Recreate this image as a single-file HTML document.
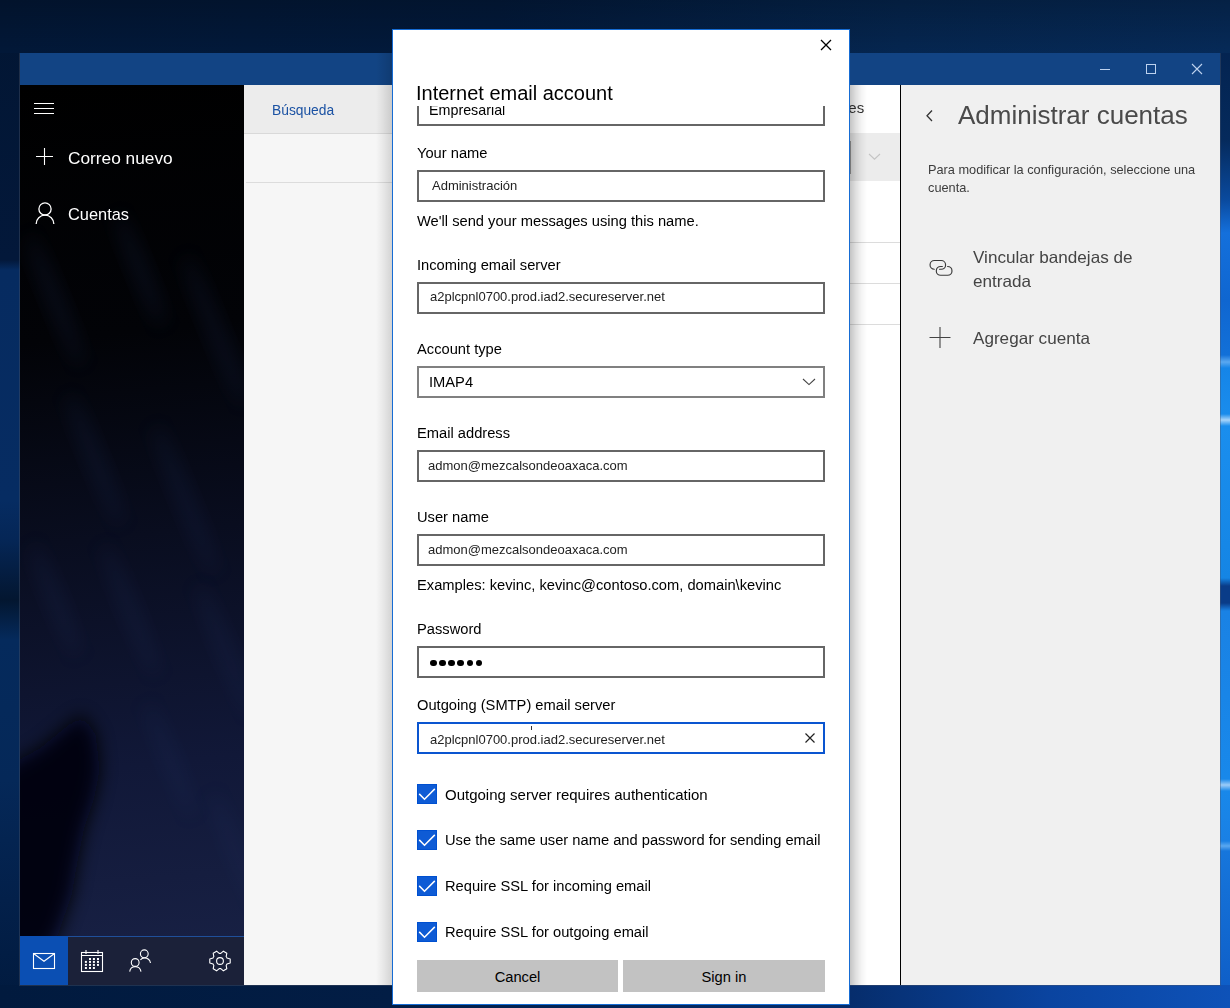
<!DOCTYPE html>
<html><head><meta charset="utf-8">
<style>
*{margin:0;padding:0;box-sizing:border-box}
html,body{width:1230px;height:1008px;overflow:hidden}
body{position:relative;font-family:"Liberation Sans",sans-serif;background:#031a3c}
.a{position:absolute}
.t{position:absolute;white-space:nowrap;line-height:1;will-change:transform}
#bg{left:0;top:0;width:1230px;height:1008px;
background:linear-gradient(180deg,#021633 0px,#03183a 260px,#062b60 270px,#062c62 500px,#052656 540px,#031630 600px,#052a5c 640px,#052858 780px,#03204a 900px,#011a3e 1008px);}
#bgr{left:1200px;top:0;width:30px;height:1008px;background:linear-gradient(180deg,#03204a 0,#052a5c 140px,#0a4a9e 200px,#1470dc 233px,#0f66d0 300px,#1270d8 355px,#5aa8f0 362px,#1585e8 368px,#1a8cec 414px,#a8d4fa 420px,#1a8eee 426px,#1585e4 578px,#0a3c88 586px,#0a3c88 603px,#1a82e4 611px,#1888ea 779px,#9cccf8 785px,#1888ea 791px,#1a80e4 841px,#5aa8f0 846px,#1676dc 851px,#0f5fc8 985px,#0c50b0 1008px)}
#bgt{left:0;top:0;width:1230px;height:53px;background:linear-gradient(180deg,rgba(0,0,0,0.22),rgba(0,0,0,0)),linear-gradient(90deg,#021838 0,#021a3c 500px,#052650 900px,#062a58 1230px)}
#bgb{left:0;top:985px;width:1230px;height:23px;background:linear-gradient(90deg,#011a3e 0,#021d45 392px,#062d6c 850px,#0a44a0 1050px,#0e52b8 1230px)}
#title{left:20px;top:53px;width:1200px;height:32px;background:#124484}
#nav{left:20px;top:85px;width:224px;height:900px;
background:linear-gradient(174deg,#000000 0%,#020307 28%,#090d1f 50%,#111838 75%,#192246 100%)}
#navbar{left:20px;top:936px;width:224px;height:49px;background:#1b2139;border-top:1px solid #1f4f9a}
#mailtile{left:20px;top:936px;width:48px;height:49px;background:#0b4fb3}
#list{left:244px;top:85px;width:656px;height:900px;background:#f6f6f6}
#srch{left:244px;top:85px;width:656px;height:49px;background:#ececec;border-bottom:1px solid #d9d9d9}
#mid{left:849px;top:85px;width:51px;height:900px;background:#fff}
#right{left:901px;top:85px;width:319px;height:900px;background:#f0f0f0}
#vline{left:900px;top:85px;width:1px;height:900px;background:#000}
#dlg{left:392px;top:29px;width:458px;height:976px;background:#fff;border:1px solid #166cd4}
.lbl{font-size:14.7px;color:#000}
.box{position:absolute;left:417px;width:408px;height:32px;border:2px solid #666;background:#fff}
.fv{font-size:13px;color:#222}
.cb{position:absolute;left:417px;width:20px;height:20px;background:#0e5bd5;border:1px solid #0050d0}
.btn{position:absolute;top:960px;height:32px;background:#c2c2c2;font-size:14.7px;color:#000;text-align:center;line-height:34px}
</style></head><body>
<div id="bg" class="a"></div>
<div id="bgr" class="a"></div>
<div id="bgt" class="a"></div>
<div id="bgb" class="a"></div>

<div class="a" style="left:19px;top:53px;width:1202px;height:933px;border:1px solid rgba(75,85,105,0.4);border-top:0"></div>
<div id="title" class="a"></div>
<div id="nav" class="a"></div>
<svg class="a" style="left:20px;top:85px" width="224" height="851" viewBox="20 85 224 851"><defs><filter id="bl" x="-50%" y="-50%" width="200%" height="200%"><feGaussianBlur stdDeviation="9"/></filter><filter id="bl2" x="-50%" y="-50%" width="200%" height="200%"><feGaussianBlur stdDeviation="25"/></filter></defs>
<ellipse cx="55" cy="300" rx="9" ry="70" fill="#22305e" opacity="0.2" filter="url(#bl)" transform="rotate(-22 55 300)"/><ellipse cx="140" cy="270" rx="9" ry="60" fill="#22305e" opacity="0.2" filter="url(#bl)" transform="rotate(-22 140 270)"/><ellipse cx="215" cy="330" rx="9" ry="80" fill="#22305e" opacity="0.2" filter="url(#bl)" transform="rotate(-22 215 330)"/><ellipse cx="95" cy="460" rx="9" ry="70" fill="#22305e" opacity="0.2" filter="url(#bl)" transform="rotate(-22 95 460)"/><ellipse cx="185" cy="500" rx="9" ry="80" fill="#22305e" opacity="0.2" filter="url(#bl)" transform="rotate(-22 185 500)"/><ellipse cx="130" cy="610" rx="9" ry="70" fill="#22305e" opacity="0.2" filter="url(#bl)" transform="rotate(-22 130 610)"/><ellipse cx="225" cy="650" rx="9" ry="70" fill="#22305e" opacity="0.2" filter="url(#bl)" transform="rotate(-22 225 650)"/><ellipse cx="55" cy="600" rx="9" ry="60" fill="#22305e" opacity="0.2" filter="url(#bl)" transform="rotate(-22 55 600)"/><ellipse cx="170" cy="760" rx="9" ry="60" fill="#22305e" opacity="0.2" filter="url(#bl)" transform="rotate(-22 170 760)"/><ellipse cx="235" cy="850" rx="9" ry="60" fill="#22305e" opacity="0.2" filter="url(#bl)" transform="rotate(-22 235 850)"/><path d="M0 770L40 748L62 730L82 714L96 735L100 770L94 800L84 830L78 860L72 895L58 935L40 960L0 960Z" fill="#040508" filter="url(#bl)" opacity="0.92"/>

</svg>
<div id="navbar" class="a"></div>
<div id="mailtile" class="a"></div>

<div id="list" class="a"></div>
<div id="srch" class="a"></div>
<div id="mid" class="a"></div>
<div id="right" class="a"></div>
<div id="vline" class="a"></div>


<!-- title bar buttons -->
<div class="a" style="left:1100px;top:69px;width:10px;height:1px;background:#bdd2ee"></div>
<div class="a" style="left:1146px;top:64px;width:10px;height:10px;border:1px solid #bdd2ee"></div>
<svg class="a" style="left:1191px;top:63px" width="12" height="12" viewBox="0 0 12 12"><path d="M1 1L11 11M11 1L1 11" stroke="#bdd2ee" stroke-width="1.1" fill="none"/></svg>
<!-- nav -->
<div class="a" style="left:34px;top:103px;width:20px;height:1px;background:#fff"></div>
<div class="a" style="left:34px;top:108px;width:20px;height:1px;background:#fff"></div>
<div class="a" style="left:34px;top:113px;width:20px;height:1px;background:#fff"></div>
<svg class="a" style="left:35px;top:147px" width="20" height="20" viewBox="0 0 20 20"><path d="M9.5 1V18M1 9.5H18" stroke="#fff" stroke-width="1.1" fill="none"/></svg>
<div class="t" style="left:68px;top:149.5px;font-size:17.3px;color:#fff">Correo nuevo</div>
<svg class="a" style="left:34px;top:201px" width="22" height="26" viewBox="0 0 22 26"><circle cx="11" cy="7.9" r="6.1" stroke="#fff" stroke-width="1.3" fill="none"/><path d="M2.15 23A8.85 8.85 0 0 1 19.85 23" stroke="#fff" stroke-width="1.3" fill="none"/></svg>
<div class="t" style="left:68px;top:205.5px;font-size:16.4px;color:#fff">Cuentas</div>
<!-- bottom nav icons -->
<svg class="a" style="left:32px;top:952px" width="24" height="18" viewBox="0 0 24 18"><rect x="1.5" y="1.5" width="21" height="15" stroke="#fff" stroke-width="1.1" fill="none"/><path d="M1.5 1.5L12 9.3L22.5 1.5" stroke="#fff" stroke-width="1.1" fill="none"/></svg>
<svg class="a" style="left:80px;top:949px" width="24" height="24" viewBox="0 0 24 24"><rect x="1.5" y="3.5" width="21" height="19" stroke="#fff" stroke-width="1.1" fill="none"/><path d="M1.5 6.5H22.5M6 1V5M18 1V5" stroke="#fff" stroke-width="1.1" fill="none"/><g fill="#fff"><rect x="9.0" y="9.0" width="2" height="2"/><rect x="12.9" y="9.0" width="2" height="2"/><rect x="17.0" y="9.0" width="2" height="2"/><rect x="4.9" y="11.9" width="2" height="2"/><rect x="9.0" y="11.9" width="2" height="2"/><rect x="12.9" y="11.9" width="2" height="2"/><rect x="17.0" y="11.9" width="2" height="2"/><rect x="4.9" y="14.9" width="2" height="2"/><rect x="9.0" y="14.9" width="2" height="2"/><rect x="12.9" y="14.9" width="2" height="2"/><rect x="17.0" y="14.9" width="2" height="2"/><rect x="4.9" y="18.0" width="2" height="2"/><rect x="9.0" y="18.0" width="2" height="2"/><rect x="12.9" y="18.0" width="2" height="2"/></g></svg>
<svg class="a" style="left:128px;top:948px" width="24" height="26" viewBox="0 0 24 26"><circle cx="16.3" cy="5.8" r="3.9" stroke="#fff" stroke-width="1.1" fill="none"/><path d="M12.4 11.8C13.4 10.6 14.8 10 16.3 10C19.5 10 22 12.2 22.5 15" stroke="#fff" stroke-width="1.1" fill="none"/><circle cx="7.2" cy="14.5" r="3.9" stroke="#fff" stroke-width="1.1" fill="none"/><path d="M1.7 23.6C2.1 20.6 4.4 18.7 7.2 18.7C10 18.7 12.5 20.6 13 23.6" stroke="#fff" stroke-width="1.1" fill="none"/></svg>
<svg class="a" style="left:208px;top:950px" width="24" height="24" viewBox="0 0 24 24"><path d="M18.94 7.91L22.21 9.02L22.21 12.98L18.94 14.09A7.6 7.6 0 0 1 18.15 15.47L18.82 18.85L15.39 20.83L12.79 18.56A7.6 7.6 0 0 1 11.21 18.56L8.61 20.83L5.18 18.85L5.85 15.47A7.6 7.6 0 0 1 5.06 14.09L1.79 12.98L1.79 9.02L5.06 7.91A7.6 7.6 0 0 1 5.85 6.53L5.18 3.15L8.61 1.17L11.21 3.44A7.6 7.6 0 0 1 12.79 3.44L15.39 1.17L18.82 3.15L18.15 6.53A7.6 7.6 0 0 1 18.94 7.91Z" stroke="#fff" stroke-width="1.1" fill="none" stroke-linejoin="round"/><circle cx="12" cy="11" r="3.4" stroke="#fff" stroke-width="1.1" fill="none"/></svg>
<!-- list pane -->
<div class="t" style="left:272px;top:103.7px;font-size:13.8px;color:#1b52a3">Búsqueda</div>
<div class="a" style="left:246px;top:182px;width:603px;height:1px;background:#dcdcdc"></div>
<div class="a" style="left:849px;top:85px;width:51px;height:48px;background:#fff"></div>
<div class="a" style="left:849px;top:133px;width:51px;height:48px;background:#ececec"></div>
<div class="t" style="left:840px;top:100px;font-size:15px;color:#333">des</div>
<div class="a" style="left:849px;top:141px;width:2px;height:33px;background:#9a9a9a"></div>
<svg class="a" style="left:867px;top:151px" width="14" height="10" viewBox="0 0 14 10"><path d="M2 3L7.5 8.2L13 3" stroke="#c4c4c4" stroke-width="1.1" fill="none"/></svg>
<div class="a" style="left:849px;top:242px;width:51px;height:1px;background:#dcdcdc"></div>
<div class="a" style="left:849px;top:283px;width:51px;height:1px;background:#dcdcdc"></div>
<div class="a" style="left:849px;top:324px;width:51px;height:1px;background:#dcdcdc"></div>
<!-- shadows -->
<div class="a" style="left:376px;top:53px;width:16px;height:932px;background:linear-gradient(90deg,rgba(0,0,0,0),rgba(0,0,0,0.05) 40%,rgba(0,0,0,0.14))"></div>
<div class="a" style="left:850px;top:85px;width:17px;height:900px;background:linear-gradient(90deg,rgba(0,0,0,0.23),rgba(0,0,0,0.12) 35%,rgba(0,0,0,0.04) 70%,rgba(0,0,0,0))"></div>
<!-- right pane -->
<svg class="a" style="left:924px;top:109px" width="12" height="14" viewBox="0 0 12 14"><path d="M8 1.5L3 6.8L8 12" stroke="#333" stroke-width="1.3" fill="none"/></svg>
<div class="t" style="left:958px;top:102.3px;font-size:26px;color:#4a4a4a">Administrar cuentas</div>
<div class="t" style="left:928px;top:160.7px;font-size:12.75px;color:#3c3c3c;line-height:17.5px">Para modificar la configuración, seleccione una<br>cuenta.</div>
<svg class="a" style="left:924px;top:254px" width="34" height="28" viewBox="0 0 1224 1008"><path d="M370 550A157 157 0 0 1 380 235H620A157 157 0 0 1 620 550H560M660 450H600A157 157 0 0 0 600 765H850A157 157 0 0 0 850 450" stroke="#3a3a3a" stroke-width="42" fill="none" stroke-linecap="round"/></svg>
<div class="t" style="left:973px;top:245.5px;font-size:17.13px;color:#444;line-height:23.5px">Vincular bandejas de<br>entrada</div>
<svg class="a" style="left:928px;top:326px" width="24" height="24" viewBox="0 0 24 24"><path d="M12 1V22M1.5 11.5H22.5" stroke="#444" stroke-width="1.1" fill="none"/></svg>
<div class="t" style="left:973px;top:330px;font-size:17.13px;color:#444">Agregar cuenta</div>

<div id="dlg" class="a"></div>
<div class="a" style="left:393px;top:106px;width:456px;height:30px;overflow:hidden">
 <div class="box" style="left:24px;top:-12px"></div>
 <div class="t lbl" style="left:36px;top:-2.9px;font-size:14.3px">Empresarial</div>
</div>
<div class="t" style="left:416px;top:83px;font-size:20px;color:#000">Internet email account</div>
<svg class="a" style="left:820px;top:39px" width="12" height="12" viewBox="0 0 12 12"><path d="M1 1L11 11M11 1L1 11" stroke="#000" stroke-width="1.3" fill="none"/></svg>
<div class="t lbl" style="left:417px;top:146px">Your name</div>
<div class="box" style="top:170px"></div>
<div class="t fv" style="left:432px;top:179px">Administración</div>
<div class="t lbl" style="left:417px;top:214px">We'll send your messages using this name.</div>
<div class="t lbl" style="left:417px;top:258px">Incoming email server</div>
<div class="box" style="top:282px"></div>
<div class="t fv" style="left:430px;top:290px">a2plcpnl0700.prod.iad2.secureserver.net</div>
<div class="t lbl" style="left:417px;top:342px">Account type</div>
<div class="box" style="top:366px;border-color:#808080"></div>
<div class="t lbl" style="left:429px;top:375px">IMAP4</div>
<svg class="a" style="left:801px;top:376px" width="16" height="10" viewBox="0 0 16 10"><path d="M2 3L8 8.6L14 3" stroke="#444" stroke-width="1.1" fill="none"/></svg>
<div class="t lbl" style="left:417px;top:426px">Email address</div>
<div class="box" style="top:450px"></div>
<div class="t fv" style="left:428px;top:459.3px">admon@mezcalsondeoaxaca.com</div>
<div class="t lbl" style="left:417px;top:510px">User name</div>
<div class="box" style="top:534px"></div>
<div class="t fv" style="left:428px;top:543.3px">admon@mezcalsondeoaxaca.com</div>
<div class="t lbl" style="left:417px;top:578px">Examples: kevinc, kevinc@contoso.com, domain\kevinc</div>
<div class="t lbl" style="left:417px;top:622px">Password</div>
<div class="box" style="top:646px"></div>

<div class="a" style="left:430.30px;top:659.6px;width:6.6px;height:6.6px;border-radius:50%;background:#000"></div><div class="a" style="left:439.35px;top:659.6px;width:6.6px;height:6.6px;border-radius:50%;background:#000"></div><div class="a" style="left:448.40px;top:659.6px;width:6.6px;height:6.6px;border-radius:50%;background:#000"></div><div class="a" style="left:457.45px;top:659.6px;width:6.6px;height:6.6px;border-radius:50%;background:#000"></div><div class="a" style="left:466.50px;top:659.6px;width:6.6px;height:6.6px;border-radius:50%;background:#000"></div><div class="a" style="left:475.55px;top:659.6px;width:6.6px;height:6.6px;border-radius:50%;background:#000"></div>
<div class="t lbl" style="left:417px;top:698px">Outgoing (SMTP) email server</div>
<div class="box" style="top:722px;border-color:#0a55d0"></div>
<div class="t fv" style="left:430px;top:732.5px">a2plcpnl0700.prod.iad2.secureserver.net</div>
<svg class="a" style="left:804px;top:732px" width="12" height="12" viewBox="0 0 12 12"><path d="M1.5 1.5L10.5 10.5M10.5 1.5L1.5 10.5" stroke="#222" stroke-width="1.2" fill="none"/></svg>
<div class="a" style="left:531px;top:726px;width:1px;height:4px;background:#333"></div>

<div class="cb" style="top:784px"></div><svg class="a" style="left:417px;top:784px" width="20" height="20" viewBox="0 0 20 20"><path d="M2.2 9.9L7.5 15.2L17.8 4.9" stroke="#fff" stroke-width="1.5" fill="none"/></svg>
<div class="t lbl" style="left:445px;top:786.8px;font-size:15px">Outgoing server requires authentication</div>
<div class="cb" style="top:830px"></div><svg class="a" style="left:417px;top:830px" width="20" height="20" viewBox="0 0 20 20"><path d="M2.2 9.9L7.5 15.2L17.8 4.9" stroke="#fff" stroke-width="1.5" fill="none"/></svg>
<div class="t lbl" style="left:445px;top:833px">Use the same user name and password for sending email</div>
<div class="cb" style="top:876px"></div><svg class="a" style="left:417px;top:876px" width="20" height="20" viewBox="0 0 20 20"><path d="M2.2 9.9L7.5 15.2L17.8 4.9" stroke="#fff" stroke-width="1.5" fill="none"/></svg>
<div class="t lbl" style="left:445px;top:879px">Require SSL for incoming email</div>
<div class="cb" style="top:922px"></div><svg class="a" style="left:417px;top:922px" width="20" height="20" viewBox="0 0 20 20"><path d="M2.2 9.9L7.5 15.2L17.8 4.9" stroke="#fff" stroke-width="1.5" fill="none"/></svg>
<div class="t lbl" style="left:445px;top:925px">Require SSL for outgoing email</div>
<div class="btn" style="left:417px;width:201px">Cancel</div>
<div class="btn" style="left:623px;width:202px">Sign in</div>
</body></html>
